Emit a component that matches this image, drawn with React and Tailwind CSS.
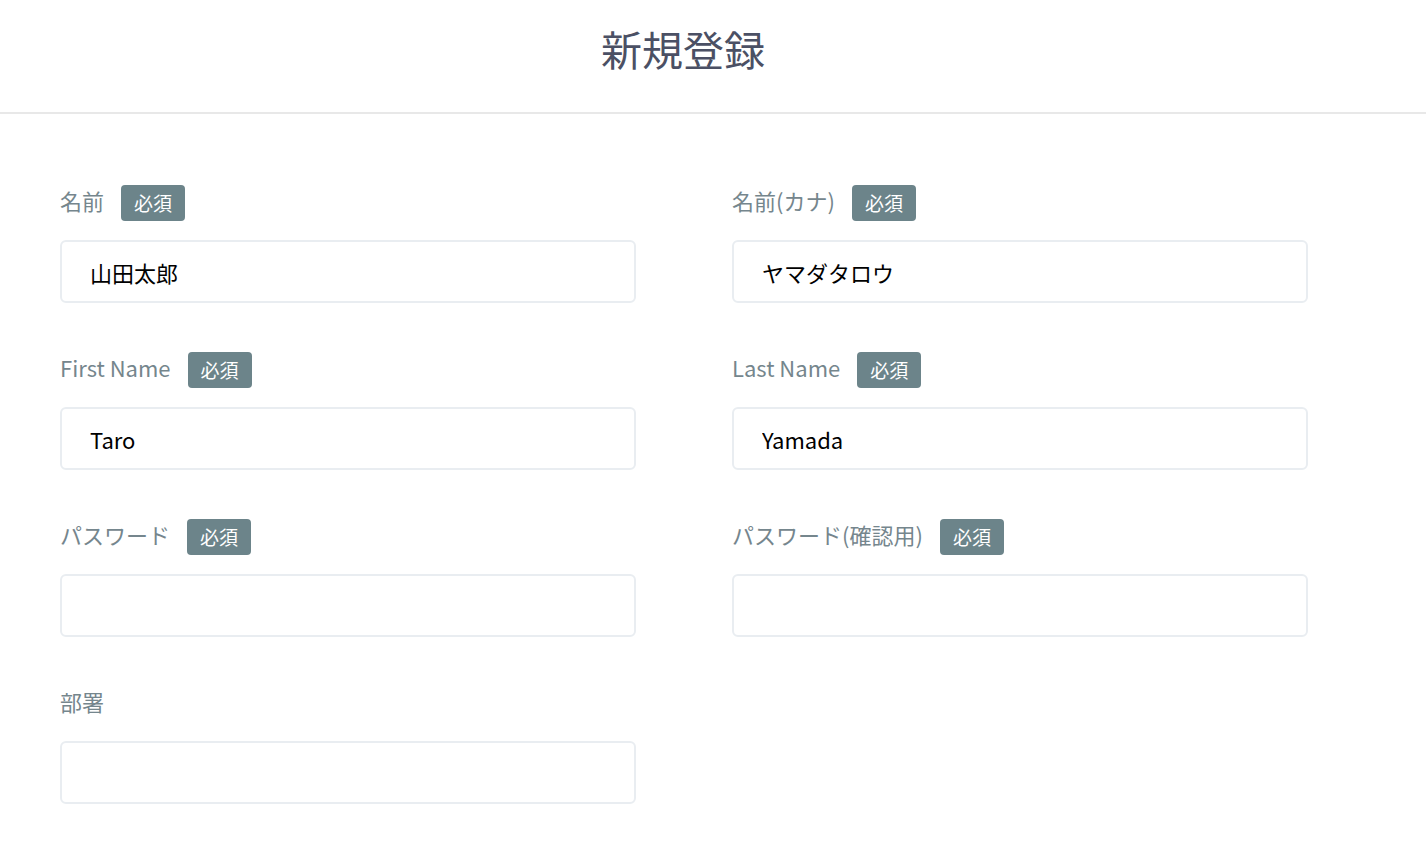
import React, { useState } from 'react';

const fields = [
  { name: 'name', label: '名前', required: true, value: '山田太郎' },
  { name: 'kana', label: '名前(カナ)', required: true, value: 'ヤマダタロウ' },
  { name: 'firstName', label: 'First Name', required: true, value: 'Taro' },
  { name: 'lastName', label: 'Last Name', required: true, value: 'Yamada' },
  { name: 'password', label: 'パスワード', required: true, value: '', type: 'password' },
  { name: 'passwordConfirm', label: 'パスワード(確認用)', required: true, value: '', type: 'password' },
  { name: 'department', label: '部署', required: false, value: '' },
];

const Field = ({ field, value, onChange }) => (
  <div className="flex flex-col">
    <div className="flex items-center h-9 gap-[17px]">
      <span className="text-[22px] leading-none pb-[6px] text-[#75868d]">{field.label}</span>
      {field.required && (
        <span className="h-9 px-[13px] flex items-center rounded bg-[#6c848a] text-white text-[19px]">必須</span>
      )}
    </div>
    <input
      type={field.type || 'text'}
      value={value}
      onChange={(e) => onChange(field.name, e.target.value)}
      className="mt-[19px] h-[63px] w-full rounded-md border-2 border-[#e9edf1] bg-white pl-[28px] text-[22px] text-black outline-none"
    />
  </div>
);

const App = () => {
  const [form, setForm] = useState(
    Object.fromEntries(fields.map((f) => [f.name, f.value]))
  );

  const handleChange = (name, value) => setForm((prev) => ({ ...prev, [name]: value }));

  return (
    <div className="min-h-screen bg-white font-['Noto_Sans_CJK_JP',sans-serif]">
      <header className="h-[114px] border-b-2 border-[#e8e8e8] flex items-center justify-center pb-[14px] pr-[60px]">
        <h1 className="text-[41px] text-[#4b5064]">新規登録</h1>
      </header>
      <form className="pt-[71px] pl-[60px] grid grid-cols-[576px_576px] gap-x-[96px] gap-y-[49px]">
        {fields.map((field) => (
          <Field key={field.name} field={field} value={form[field.name]} onChange={handleChange} />
        ))}
      </form>
    </div>
  );
};

export default App;
